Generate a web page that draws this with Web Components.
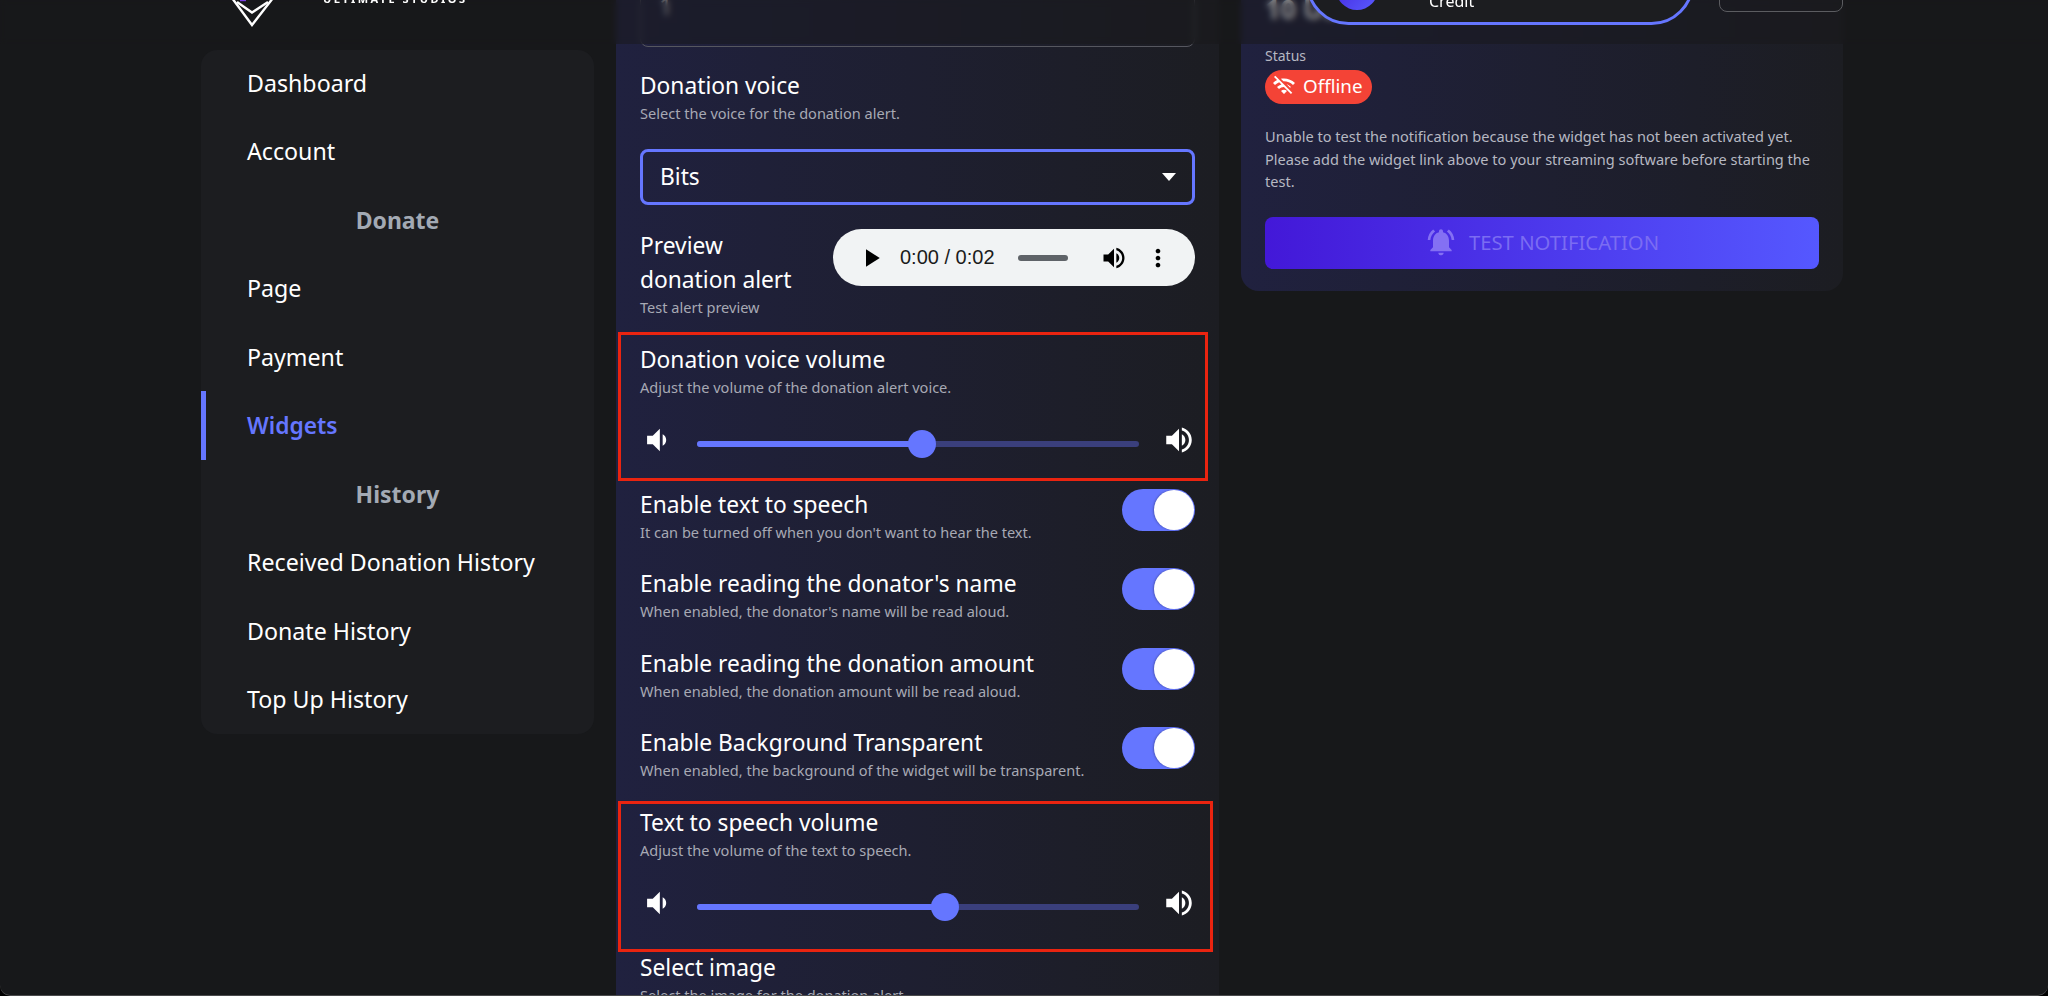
<!DOCTYPE html>
<html>
<head>
<meta charset="utf-8">
<title>Widgets</title>
<style>
  html, body { margin: 0; height: 100%; overflow: hidden; background: #000; }
  body { font-family: "Noto Sans", "Open Sans", sans-serif; color: #fff; }
</style>
</head>
<body>
<app-page>
  <top-bar slot="top"></top-bar>
  <side-nav slot="nav"></side-nav>
  <widget-settings slot="main"></widget-settings>
  <test-panel slot="aside"></test-panel>
</app-page>

<script>
const ICONS = {
  low: 'M18.5 12c0-1.77-1.02-3.29-2.5-4.03v8.05c1.48-.73 2.5-2.25 2.5-4.02zM5 9v6h4l5 5V4L9 9H5z',
  high: 'M3 9v6h4l5 5V4L7 9H3zm13.5 3c0-1.77-1.02-3.29-2.5-4.03v8.05c1.48-.73 2.5-2.25 2.5-4.02zM14 3.23v2.06c2.89.86 5 3.54 5 6.71s-2.11 5.85-5 6.71v2.06c4.01-.91 7-4.49 7-8.77s-2.99-7.86-7-8.77z',
  wifiOff: 'M22.99 9C19.15 5.16 13.8 3.76 8.84 4.78l2.52 2.52c3.47-.17 6.99 1.05 9.63 3.7l2-2zm-4 4c-1.29-1.29-2.84-2.27-4.49-2.89l3.53 3.53.96-.64zM2 3.05 5.07 6.1C3.6 6.82 2.22 7.78 1 9l1.99 2c1.24-1.24 2.67-2.16 4.2-2.77l2.24 2.24C7.81 10.89 6.27 11.74 5 13v.01L6.99 15c1.36-1.36 3.14-2.04 4.92-2.06L18.98 20l1.27-1.26L3.29 1.79 2 3.05zM9 17l3 3 3-3c-1.65-1.66-4.34-1.66-6 0z',
  bell: 'M7.58 4.08 6.15 2.65C3.75 4.48 2.17 7.3 2.03 10.5h2c.15-2.65 1.51-4.97 3.55-6.42zm12.39 6.42h2c-.15-3.2-1.73-6.02-4.12-7.85l-1.42 1.43c2.02 1.45 3.39 3.77 3.54 6.42zM18 11c0-3.07-1.64-5.64-4.5-6.32V4c0-.83-.67-1.5-1.5-1.5s-1.5.67-1.5 1.5v.68C7.63 5.36 6 7.92 6 11v5l-2 2v1h16v-1l-2-2v-5zm-6 11c.14 0 .27-.01.4-.04.65-.14 1.18-.58 1.44-1.18.1-.24.15-.5.15-.78h-4c.01 1.1.9 2 2.01 2z',
  play: 'M8 5v14l11-7z',
  dots: 'M12 8c1.1 0 2-.9 2-2s-.9-2-2-2-2 .9-2 2 .9 2 2 2zm0 2c-1.1 0-2 .9-2 2s.9 2 2 2 2-.9 2-2-.9-2-2-2zm0 6c-1.1 0-2 .9-2 2s.9 2 2 2 2-.9 2-2-.9-2-2-2z'
};

function icon(name, size, color) {
  return `<svg width="${size}" height="${size}" viewBox="0 0 24 24" fill="${color}" style="display:block;flex:none"><path d="${ICONS[name]}"/></svg>`;
}

const CARD_BG = 'linear-gradient(90deg, #20213f 0%, #1c1d22 100%)';

class AppPage extends HTMLElement {
  constructor() {
    super();
    this.attachShadow({ mode: 'open' });
    this.shadowRoot.innerHTML = `
      <style>
        :host {
          display: block;
          position: relative;
          height: 996px;
          overflow: hidden;
          background: #17181a;
          border-radius: 0 0 10px 10px;
        }
        /* window edge along the bottom */
        :host::after {
          content: "";
          position: absolute;
          inset: 0;
          border-radius: 0 0 10px 10px;
          box-shadow: inset 0 -1px 0 #4a4a4c;
          pointer-events: none;
          z-index: 6;
        }
        .columns {
          display: grid;
          grid-template-columns: 393px 603px 602px;
          column-gap: 22px;
          align-items: start;
          padding-left: 201px;
        }
      </style>
      <slot name="top"></slot>
      <div class="columns">
        <slot name="nav"></slot>
        <slot name="main"></slot>
        <slot name="aside"></slot>
      </div>
    `;
  }
}

class TopBar extends HTMLElement {
  constructor() {
    super();
    this.attachShadow({ mode: 'open' });
    this.shadowRoot.innerHTML = `
      <style>
        :host {
          display: block;
          position: absolute;
          top: 0; left: 0; right: 0;
          height: 44px;
          z-index: 5;
          overflow: hidden;
          background: rgba(23, 24, 26, 0.5);
          -webkit-backdrop-filter: blur(3px);
          backdrop-filter: blur(3px);
        }
        .logo { position: absolute; left: 226px; top: -28px; }
        .brand {
          position: absolute;
          left: 323px;
          bottom: 35.5px;
          font: 700 11px/20px "Noto Sans", sans-serif;
          letter-spacing: 2.45px;
          white-space: nowrap;
        }
        .credit {
          position: absolute;
          left: 1306px;
          width: 388px;
          top: -60px;
          height: 85px;
          box-sizing: border-box;
          border: 3px solid #6576ff;
          border-radius: 44px;
          background: #1c1d20;
        }
        .avatar {
          position: absolute;
          left: 27px;
          bottom: 12px;
          width: 42px;
          height: 42px;
          border-radius: 50%;
          background: linear-gradient(135deg, #3f1cd8, #5a5cff);
        }
        .credit span {
          position: absolute;
          left: 120px;
          bottom: 10px;
          font-size: 16px;
          line-height: 22px;
        }
        .outline {
          position: absolute;
          left: 1719px;
          width: 124px;
          top: -40px;
          height: 52px;
          box-sizing: border-box;
          border: 1px solid #5b5c60;
          border-radius: 8px;
        }
      </style>
      <svg class="logo" width="52" height="56" viewBox="0 0 52 56" fill="none" stroke="#fff" stroke-width="2.4">
        <path d="M6 26 L26 53 L47 26"/>
        <path d="M11 30 L26 40.5 L42 30"/>
        <path d="M14 28 H20" stroke="#7b3fe4"/>
      </svg>
      <div class="brand">ULTIMATE STUDIOS</div>
      <div class="credit"><i class="avatar"></i><span>Credit</span></div>
      <div class="outline"></div>
    `;
  }
}

class NavItem extends HTMLElement {
  constructor() {
    super();
    this.attachShadow({ mode: 'open' });
    this.shadowRoot.innerHTML = `
      <style>
        :host {
          display: flex;
          align-items: center;
          position: relative;
          height: 68.5px;
          padding-left: 46px;
          font-size: 23.2px;
          color: #fff;
        }
        :host([heading]) {
          justify-content: center;
          padding-left: 0;
          font-weight: 700;
          font-size: 23px;
          color: #a3aab4;
        }
        :host([active]) { color: #6576ff; font-weight: 600; font-size: 22.8px; }
        :host([active])::before {
          content: "";
          position: absolute;
          left: 0; top: 0; bottom: 0;
          width: 5px;
          background: #6576ff;
        }
      </style>
      <slot></slot>
    `;
  }
}

class SideNav extends HTMLElement {
  constructor() {
    super();
    this.attachShadow({ mode: 'open' });
    const items = [
      ['Dashboard'], ['Account'], ['Donate', 'heading'], ['Page'], ['Payment'],
      ['Widgets', 'active'], ['History', 'heading'],
      ['Received Donation History'], ['Donate History'], ['Top Up History']
    ];
    this.shadowRoot.innerHTML = `
      <style>
        :host {
          display: block;
          margin-top: 50px;
          height: 684px;
          border-radius: 16px;
          background: #1c1d20;
          overflow: hidden;
        }
        .list { margin-top: -1.5px; }
      </style>
      <div class="list">
        ${items.map(([t, a]) => `<nav-item ${a || ''}>${t}</nav-item>`).join('')}
      </div>
    `;
  }
}

class FieldLabel extends HTMLElement {
  constructor() {
    super();
    this.attachShadow({ mode: 'open' });
    this.shadowRoot.innerHTML = `
      <style>
        :host { display: block; padding-bottom: 2px; }
        .title { font-size: 22.75px; line-height: 36px; color: #fff; white-space: nowrap; }
        .desc { margin-top: -2px; font-size: 14.55px; line-height: 22px; color: #a7a9b4; white-space: nowrap; }
      </style>
      <div class="title">${this.getAttribute('title')}</div>
      <div class="desc">${this.getAttribute('desc')}</div>
    `;
  }
}

class SelectBox extends HTMLElement {
  constructor() {
    super();
    this.attachShadow({ mode: 'open' });
    this.shadowRoot.innerHTML = `
      <style>
        :host {
          display: flex;
          align-items: center;
          justify-content: space-between;
          box-sizing: border-box;
          height: 56px;
          padding: 0 16px 2px 17px;
          border: 3px solid #6576ff;
          border-radius: 8px;
          font-size: 22.75px;
        }
        i { width: 0; height: 0; margin-top: 2px; border: 7px solid transparent; border-top: 8px solid #fff; border-bottom: 0; }
      </style>
      <slot></slot><i></i>
    `;
  }
}

class AudioPreview extends HTMLElement {
  constructor() {
    super();
    this.attachShadow({ mode: 'open' });
    this.shadowRoot.innerHTML = `
      <style>
        :host {
          display: flex;
          align-items: center;
          box-sizing: border-box;
          width: 362px;
          height: 57px;
          padding-left: 23px;
          border-radius: 29px;
          background: #f1f3f4;
          color: #1b1b1b;
          font: 20px "Liberation Sans", Arial, sans-serif;
          flex: none;
        }
        .time { margin-left: 14px; white-space: nowrap; }
        .bar { width: 50px; height: 6px; margin: 0 32px 0 23px; border-radius: 3px; background: #5f6368; flex: none; }
        .dots { margin-left: 16px; }
      </style>
      ${icon('play', 30, '#000')}
      <span class="time">0:00 / 0:02</span>
      <span class="bar"></span>
      ${icon('high', 28, '#000')}
      <span class="dots">${icon('dots', 28, '#000')}</span>
    `;
  }
}

class VolumeField extends HTMLElement {
  constructor() {
    super();
    this.attachShadow({ mode: 'open' });
    const pct = this.getAttribute('value');
    this.shadowRoot.innerHTML = `
      <style>
        :host { display: block; position: relative; }
        .mark {
          position: absolute;
          top: var(--mark-top);
          bottom: var(--mark-bottom);
          left: -22px;
          right: var(--mark-right);
          border: 3px solid #ea2410;
          pointer-events: none;
        }
        .row {
          display: grid;
          grid-template-columns: 57px 1fr 56px;
          align-items: center;
          height: 87px;
        }
        .row svg { margin-top: -8px; }
        .low { justify-self: start; }
        .high { justify-self: end; margin-right: -1px; }
        .track { position: relative; height: 6px; border-radius: 3px; background: #3a3f7c; }
        .fill { height: 100%; border-radius: 3px; background: #6576ff; width: ${pct}%; }
        .thumb {
          position: absolute;
          top: -11px;
          left: calc(${pct}% - 14px);
          width: 28px;
          height: 28px;
          border-radius: 50%;
          background: #6576ff;
        }
      </style>
      <div class="mark"></div>
      <field-label title="${this.getAttribute('title')}" desc="${this.getAttribute('desc')}"></field-label>
      <div class="row">
        <span class="low">${icon('low', 34, '#fff')}</span>
        <div class="track"><div class="fill"></div><div class="thumb"></div></div>
        <span class="high">${icon('high', 34, '#fff')}</span>
      </div>
    `;
  }
}

class ToggleRow extends HTMLElement {
  constructor() {
    super();
    this.attachShadow({ mode: 'open' });
    this.shadowRoot.innerHTML = `
      <style>
        :host {
          display: flex;
          justify-content: space-between;
          align-items: flex-start;
          height: 79.3px;
        }
        .switch {
          display: flex;
          justify-content: flex-end;
          align-items: center;
          box-sizing: border-box;
          width: 73px;
          height: 42px;
          margin-top: 2px;
          padding: 1px;
          border-radius: 21px;
          background: #6576ff;
        }
        .switch i { width: 40px; height: 40px; border-radius: 50%; background: #fff; box-shadow: -1px 0 2px rgba(0,0,0,.25); }
      </style>
      <field-label title="${this.getAttribute('title')}" desc="${this.getAttribute('desc')}"></field-label>
      <div class="switch"><i></i></div>
    `;
  }
}

class WidgetSettings extends HTMLElement {
  constructor() {
    super();
    this.attachShadow({ mode: 'open' });
    this.shadowRoot.innerHTML = `
      <style>
        :host {
          display: block;
          margin-top: -60px;
          padding: 0 24px;
          height: 1100px;
          background: ${CARD_BG};
        }
        .input {
          box-sizing: border-box;
          height: 107px;
          padding: 48px 18px 0;
          border: 1px solid #56575f;
          border-radius: 8px;
          font-size: 24px;
          line-height: 34px;
          color: #ddd;
        }
        .voice { margin-top: 21px; }
        select-box { margin-top: 23px; }
        .preview { display: flex; justify-content: space-between; margin-top: 22px; height: 92px; }
        .preview .name { margin-top: 1.5px; font-size: 22.75px; line-height: 34px; width: 160px; }
        .preview .hint { margin-top: -1.5px; font-size: 14.55px; line-height: 24px; color: #a7a9b4; white-space: nowrap; }
        audio-preview { margin-top: 2px; }
        .vol-a { margin-top: 23px; --mark-top: -10px; --mark-bottom: 6px; --mark-right: -13px; }
        .vol-b { margin-top: 1px; --mark-top: -4px; --mark-bottom: -2px; --mark-right: -18px; }
      </style>
      <div class="input">1</div>
      <field-label class="voice" title="Donation voice" desc="Select the voice for the donation alert."></field-label>
      <select-box>Bits</select-box>
      <div class="preview">
        <div>
          <div class="name">Preview donation alert</div>
          <div class="hint">Test alert preview</div>
        </div>
        <audio-preview></audio-preview>
      </div>
      <volume-field class="vol-a" value="51" title="Donation voice volume" desc="Adjust the volume of the donation alert voice."></volume-field>
      <toggle-row title="Enable text to speech" desc="It can be turned off when you don't want to hear the text."></toggle-row>
      <toggle-row title="Enable reading the donator's name" desc="When enabled, the donator's name will be read aloud."></toggle-row>
      <toggle-row title="Enable reading the donation amount" desc="When enabled, the donation amount will be read aloud."></toggle-row>
      <toggle-row title="Enable Background Transparent" desc="When enabled, the background of the widget will be transparent."></toggle-row>
      <volume-field class="vol-b" value="56" title="Text to speech volume" desc="Adjust the volume of the text to speech."></volume-field>
      <field-label title="Select image" desc="Select the image for the donation alert."></field-label>
    `;
  }
}

class TestPanel extends HTMLElement {
  constructor() {
    super();
    this.attachShadow({ mode: 'open' });
    this.shadowRoot.innerHTML = `
      <style>
        :host {
          display: block;
          margin-top: -60px;
          height: 351px;
          box-sizing: border-box;
          padding: 0 24px;
          border-radius: 0 0 18px 18px;
          background: ${CARD_BG};
        }
        .amount { height: 105px; padding-top: 49px; box-sizing: border-box; font-size: 27px; line-height: 40px; font-weight: 700; color: #fff; white-space: nowrap; }
        .label { font-size: 14px; line-height: 22px; color: #b6b8c2; }
        .badge {
          display: inline-flex;
          align-items: center;
          gap: 7px;
          height: 34px;
          padding: 0 10px 2px 7px;
          box-sizing: border-box;
          margin-top: 3px;
          border-radius: 17px;
          background: #f44336;
          font-size: 18.8px;
        }
        .note { margin-top: 21px; font-size: 14.55px; line-height: 22.6px; color: #b6b8c2; }
        .test {
          display: flex;
          align-items: center;
          justify-content: center;
          gap: 12px;
          box-sizing: border-box;
          height: 52px;
          padding-bottom: 2px;
          margin-top: 24px;
          border-radius: 8px;
          background: linear-gradient(90deg, #4318d8, #5558ff);
          color: #7b6cf2;
          font-size: 20.3px;
        }
      </style>
      <div class="amount">10 USD</div>
      <div class="label">Status</div>
      <div class="badge">${icon('wifiOff', 24, '#fff')}Offline</div>
      <div class="note">Unable to test the notification because the widget has not been activated yet. Please add the widget link above to your streaming software before starting the test.</div>
      <div class="test">${icon('bell', 32, '#8470f3')}TEST NOTIFICATION</div>
    `;
  }
}

customElements.define('app-page', AppPage);
customElements.define('top-bar', TopBar);
customElements.define('nav-item', NavItem);
customElements.define('side-nav', SideNav);
customElements.define('field-label', FieldLabel);
customElements.define('select-box', SelectBox);
customElements.define('audio-preview', AudioPreview);
customElements.define('volume-field', VolumeField);
customElements.define('toggle-row', ToggleRow);
customElements.define('widget-settings', WidgetSettings);
customElements.define('test-panel', TestPanel);
</script>
</body>
</html>
